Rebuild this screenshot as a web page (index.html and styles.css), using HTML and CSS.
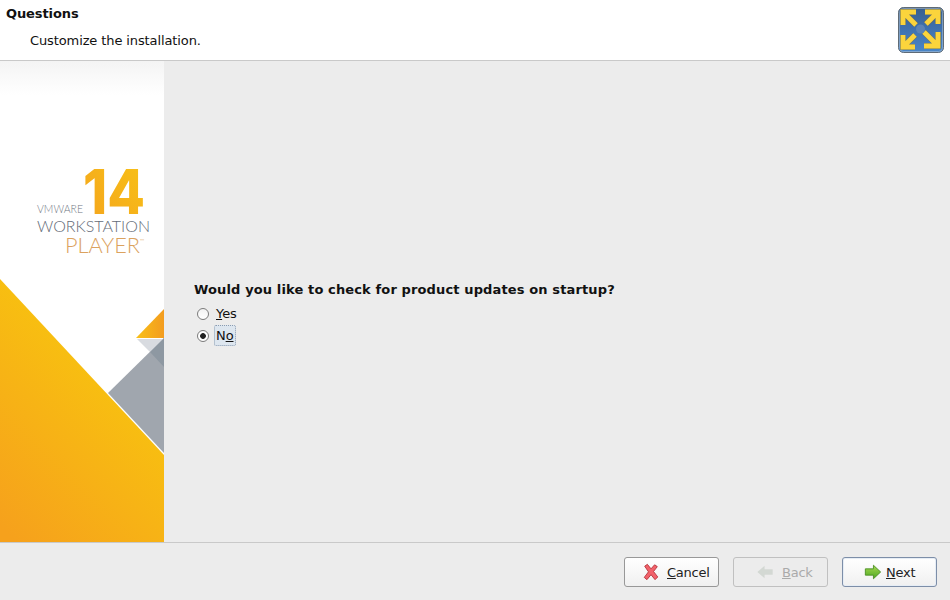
FILE: index.html
```html
<!DOCTYPE html>
<html lang="en">
<head>
  <meta charset="UTF-8" />
  <title>Questions</title>
  <link rel="stylesheet" href="styles.css">
</head>
<body>
  <header class="top">
    <div>
      <h1>Questions</h1>
      <p>Customize the installation.</p>
    </div>
    <svg class="app-icon" width="46" height="46" viewBox="0 0 46 46">
      <defs>
        <linearGradient id="tile" x1="0" y1="0" x2="0" y2="1">
          <stop offset="0" stop-color="#3a5f8c"/>
          <stop offset="0.5" stop-color="#3f72b0"/>
          <stop offset="1" stop-color="#4a86c8"/>
        </linearGradient>
      </defs>
      <rect x="0.5" y="0.5" width="45" height="45" rx="5" fill="url(#tile)" stroke="#5f6b76"/>
      <rect x="1.5" y="1.500" width="43" height="43" rx="4" fill="none" stroke="#b8c8d8" stroke-opacity="0.5"/>
      <g fill="none" stroke="#7d7440" stroke-opacity="0.7" stroke-width="6">
        <path d="M5 18V5H18M5.500 5.500L18 18"/>
        <path d="M27 5H40V17M39.500 5.500L28 17"/>
        <path d="M5 28V40H17M5.500 39.500L17 28"/>
        <path d="M40 25V39H26M39 38L26 25"/>
      </g>
      <g fill="none" stroke="#fbd43c" stroke-width="4.800">
        <path d="M5 18V5H18M5.500 5.500L18 18"/>
        <path d="M27 5H40V17M39.500 5.500L28 17"/>
        <path d="M5 28V40H17M5.500 39.500L17 28"/>
        <path d="M40 25V39H26M39 38L26 25"/>
      </g>
      <circle cx="22.500" cy="22" r="4.500" fill="#5c83b5"/>
    </svg>
  </header>

  <main class="middle">
    <aside class="side">
      <svg width="164" height="481" viewBox="0 0 164 481">
        <defs>
          <linearGradient id="fade" x1="0" y1="0" x2="0" y2="1">
            <stop offset="0" stop-color="#f4f4f4"/>
            <stop offset="1" stop-color="#ffffff"/>
          </linearGradient>
          <linearGradient id="num" x1="0" y1="1" x2="1" y2="0">
            <stop offset="0" stop-color="#f4a21e"/>
            <stop offset="1" stop-color="#f8c316"/>
          </linearGradient>
          <linearGradient id="sun" x1="0.1" y1="1" x2="0.6" y2="0.2">
            <stop offset="0" stop-color="#f6a11c"/>
            <stop offset="1" stop-color="#f8c40f"/>
          </linearGradient>
          <linearGradient id="tip" x1="0" y1="0" x2="1" y2="0">
            <stop offset="0" stop-color="#f9c017"/>
            <stop offset="1" stop-color="#f39c1f"/>
          </linearGradient>
        </defs>
        <rect width="164" height="481" fill="#fff"/>
        <rect width="164" height="34" fill="url(#fade)"/>
        <polygon points="108,332 164,277 164,392" fill="#a0a6ae"/>
        <polygon points="137,278 164,278 150,291" fill="#d8dbe0"/>
        <polygon points="150,291 164,277 164,306" fill="#8e98a2"/>
        <polygon points="136,277 164,248 164,277" fill="url(#tip)"/>
        <polygon points="0,218 164,394 164,481 0,481" fill="url(#sun)"/>
        <text class="logo-num" x="83" y="153" textLength="62" lengthAdjust="spacingAndGlyphs" fill="url(#num)">14</text>
        <text class="logo-small" x="37" y="152" textLength="46" lengthAdjust="spacingAndGlyphs">VMWARE</text>
        <text class="logo-mid" x="37" y="171" textLength="113" lengthAdjust="spacingAndGlyphs">WORKSTATION</text>
        <text class="logo-big" x="65" y="192" textLength="75" lengthAdjust="spacingAndGlyphs">PLAYER</text>
        <text class="logo-tm" x="140" y="182">™</text>
      </svg>
    </aside>
    <section class="panel">
      <h2>Would you like to check for product updates on startup?</h2>
      <label class="choice">
        <input type="radio" name="updates">
        <span><u>Y</u>es</span>
      </label>
      <label class="choice picked">
        <input type="radio" name="updates" checked>
        <span>N<u>o</u></span>
      </label>
    </section>
  </main>

  <footer class="bottom">
    <button class="btn btn-cancel" type="button">
      <svg width="18" height="18" viewBox="0 0 20 20">
        <path d="M3 3.500L6 1.500L10 6.500L14 2L17 4L12.800 9.500L17.500 15.500L14.500 18.500L10 13L5.500 18.500L2.500 16L7.200 9.800Z" fill="#f2626b" stroke="#b5343c" stroke-width="1"/>
      </svg>
      <span class="btn-label"><u>C</u>ancel</span>
    </button>
    <button class="btn btn-back" type="button" disabled>
      <svg width="18" height="18" viewBox="0 0 20 20">
        <path d="M1.500 10L9.500 3V7H18.500V13H9.500V17Z" fill="#d3d8d3"/>
      </svg>
      <span class="btn-label"><u>B</u>ack</span>
    </button>
    <button class="btn btn-next" type="button">
      <svg width="18" height="18" viewBox="0 0 20 20">
        <defs>
          <linearGradient id="go" x1="0" y1="0" x2="0" y2="1">
            <stop offset="0" stop-color="#a5d94f"/>
            <stop offset="1" stop-color="#4fa824"/>
          </linearGradient>
        </defs>
        <path d="M18.500 10L10.500 2.500V6.500H1.500V13.500H10.500V17.500Z" fill="url(#go)" stroke="#4b8f24" stroke-width="1"/>
      </svg>
      <span class="btn-label"><u>N</u>ext</span>
    </button>
  </footer>
</body>
</html>
```

FILE: styles.css
```css
html, body {
  height: 100%;
}
body {
  margin: 0;
  display: flex;
  flex-direction: column;
  height: 600px;
  overflow: hidden;
  background: #ececec;
  color: #111;
  font-family: 'DejaVu Sans', sans-serif;
  font-size: 13px;
}
.top {
  height: 60px;
  flex: none;
  display: flex;
  justify-content: space-between;
  background: #fff;
  border-bottom: 1px solid #c9c9c9;
}
.top h1 {
  margin: 6px 0 0 6px;
  font-size: 13px;
  line-height: 15px;
  font-weight: bold;
  letter-spacing: -0.1px;
}
.top p {
  margin: 12px 0 0 30px;
  line-height: 15px;
  letter-spacing: -0.11px;
}
.app-icon {
  margin: 7px 6px 0 0;
}
.middle {
  flex: 1;
  display: flex;
  min-height: 0;
}
.side {
  width: 164px;
  flex: none;
  line-height: 0;
}
.logo-num {
  font-family: 'Inter', sans-serif;
  font-weight: 800;
  font-size: 62px;
}
.logo-small, .logo-mid, .logo-big, .logo-tm {
  font-family: 'Lato', sans-serif;
  font-weight: 300;
}
.logo-small {
  font-size: 11px;
  fill: #6f7682;
}
.logo-mid {
  font-size: 16px;
  fill: #656c78;
}
.logo-big {
  font-size: 21px;
  fill: #dba25e;
}
.logo-tm {
  font-size: 6px;
  fill: #dba25e;
}
.panel {
  flex: 1;
  padding: 221px 0 0 30px;
}
.panel h2 {
  margin: 0 0 5px;
  font-size: 13px;
  line-height: 16px;
  font-weight: bold;
  letter-spacing: 0.13px;
}
.choice {
  display: flex;
  align-items: center;
  height: 22px;
  padding-left: 3px;
}
.choice input {
  appearance: none;
  box-sizing: border-box;
  width: 12px;
  height: 12px;
  margin: 0 5px 0 0;
  flex: none;
  border: 1px solid #7b7b7b;
  border-radius: 50%;
  background: linear-gradient(#f2f2f2, #fff);
}
.choice input:checked {
  background: radial-gradient(circle, #222 0 2.500px, #fff 3.200px);
}
.choice span {
  padding: 2px 2px 2px 1px;
  margin-bottom: 2px;
  border: 1px solid transparent;
  line-height: 15px;
  letter-spacing: -0.1px;
}
.choice.picked span {
  background: #dde6ef;
  border: 1px dotted #8a9bb0;
  border-radius: 2px;
}
.bottom {
  height: 58px;
  flex: none;
  box-sizing: border-box;
  display: flex;
  justify-content: flex-end;
  gap: 14px;
  padding: 14px 13px 0 0;
  border-top: 1px solid #c9c9c9;
}
.btn {
  width: 95px;
  height: 30px;
  padding: 0;
  display: flex;
  align-items: center;
  border: 1px solid #989898;
  border-radius: 3px;
  background: linear-gradient(#ffffff, #f0f0f0);
  color: #222;
  font-family: inherit;
  font-size: 13px;
}
.btn-label {
  letter-spacing: -0.25px;
}
.btn-cancel {
  padding-left: 17px;
  gap: 7px;
}
.btn-back {
  padding-left: 22px;
  gap: 8px;
  border-color: #c0c0c0;
  background: #ececec;
  color: #aaa;
}
.btn-next {
  padding-left: 21px;
  gap: 4px;
  border-color: #7d8ea8;
  box-shadow: inset 0 0 0 1px #e6edf5;
}
```
